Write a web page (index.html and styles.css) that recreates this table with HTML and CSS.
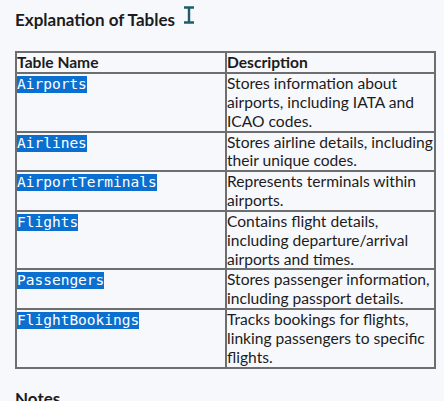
FILE: index.html
```html
<!DOCTYPE html>
<html>
<head>
<meta charset="utf-8">
<link rel="stylesheet" href="styles.css">
</head>
<body>
<div class="page">
  <div class="title-row">
    <h2 class="title">Explanation of Tables</h2>
    <svg class="cursor" width="12" height="18" viewBox="0 0 12 18"><path d="M1 1.5h10M1 16.5h10M6 1.5v15" stroke="#1e5c6b" stroke-width="2.4" fill="none"/></svg>
  </div>
  <table class="tbl">
    <colgroup><col class="c1"><col class="c2"></colgroup>
    <thead>
      <tr><th>Table Name</th><th>Description</th></tr>
    </thead>
    <tbody>
      <tr><td><code>Airports</code></td><td>Stores information about airports, including IATA and ICAO codes.</td></tr>
      <tr><td><code>Airlines</code></td><td>Stores airline details, including their unique codes.</td></tr>
      <tr><td><code>AirportTerminals</code></td><td>Represents terminals within airports.</td></tr>
      <tr><td><code>Flights</code></td><td>Contains flight details, including departure/arrival airports and times.</td></tr>
      <tr><td><code>Passengers</code></td><td>Stores passenger information, including passport details.</td></tr>
      <tr><td><code>FlightBookings</code></td><td>Tracks bookings for flights, linking passengers to specific flights.</td></tr>
    </tbody>
  </table>
  <h2 class="notes">Notes</h2>
</div>
</body>
</html>
```
FILE: styles.css
```css
html, body {
  margin: 0;
  padding: 0;
  background: #f7f8fc;
}
.page {
  padding: 10px 0 0 15px;
  font-family: Lato, "Liberation Sans", sans-serif;
  color: #1c1c1c;
}
.title-row {
  display: flex;
  align-items: flex-start;
  gap: 8px;
}
.title {
  margin: 0;
  font-size: 17px;
  line-height: 20px;
  font-weight: 700;
}
.cursor {
  display: block;
  margin-top: -4px;
}
.tbl {
  margin-top: 21px;
  border-collapse: collapse;
  width: 421px;
  table-layout: fixed;
  font-size: 15.6px;
  line-height: 18.85px;
}
.c1 { width: 210px; }
.tbl th, .tbl td {
  border: 2px solid #6e6e6e;
  padding: 0;
  vertical-align: top;
  text-align: left;
}
.tbl th {
  font-weight: 700;
  line-height: 19px;
}
.tbl code {
  display: inline-block;
  margin-top: 1px;
  font-family: "DejaVu Sans Mono", monospace;
  font-size: 14.5px;
  line-height: 17px;
  background: #0b6fd0;
  color: #fff;
}
.notes {
  margin: 20px 0 0 0;
  font-size: 17px;
  line-height: 20px;
  font-weight: 700;
}
```
